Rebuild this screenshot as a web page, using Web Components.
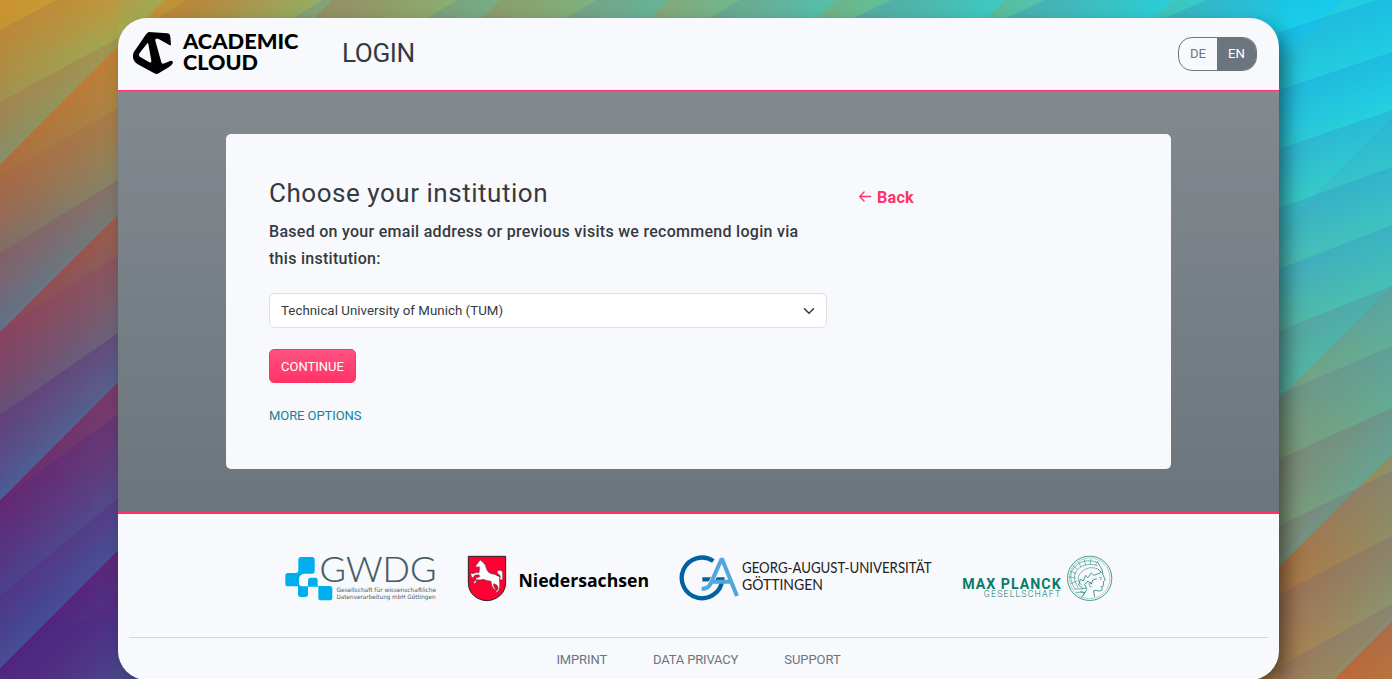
<!DOCTYPE html>
<html lang="en">
<head>
<meta charset="utf-8">
<title>Academic Cloud Login</title>
<style>
html, body { margin: 0; height: 100%; overflow: hidden; }
body { font-family: Roboto, "Liberation Sans", sans-serif; color: #343a40; font-size: 13.6px; }
</style>
</head>
<body>
<ac-backdrop></ac-backdrop>
<ac-shell>
  <ac-header slot="header" heading="LOGIN"><ac-lang slot="tools"></ac-lang></ac-header>
  <ac-panel>
    <span slot="title">Choose your institution</span>
    <span slot="lead">Based on your email address or previous visits we recommend login via this institution:</span>
    <ac-select>Technical University of Munich (TUM)</ac-select>
    <ac-button>CONTINUE</ac-button>
    <ac-more>MORE OPTIONS</ac-more>
    <ac-back slot="aside">Back</ac-back>
  </ac-panel>
  <ac-footer slot="footer">
    <logo-gwdg slot="logos"></logo-gwdg>
    <logo-nds slot="logos"></logo-nds>
    <logo-goe slot="logos"></logo-goe>
    <logo-mpg slot="logos"></logo-mpg>
    <span style="letter-spacing:-.12px">IMPRINT</span><span style="letter-spacing:-.17px">DATA PRIVACY</span><span style="letter-spacing:-.06px">SUPPORT</span>
  </ac-footer>
</ac-shell>
<script>
const define = (name, html, init) => customElements.define(name, class extends HTMLElement {
  constructor() {
    super();
    const t = document.createElement('template');
    t.innerHTML = html;
    this.attachShadow({ mode: 'open' }).appendChild(t.content.cloneNode(true));
  }
  connectedCallback() { if (init) init(this.shadowRoot, this); }
});

define('ac-backdrop', `<style>
:host { position: absolute; inset: 0; overflow: hidden; display: block; }
div, svg { position: absolute; inset: 0; width: 100%; height: 100%; }
.warm { background:
  linear-gradient(#50257f, #50257f) 0 100%/160px 60px no-repeat,
  linear-gradient(#b8703a, #c86830) 100% 100%/160px 60px no-repeat,
  linear-gradient(#d0982a 0, #c08432 75px, #a96a40 180px, #8d4a57 310px, #6b2d70 480px, #56267c 600px, #50257f 679px) 0 0/118px 100% no-repeat,
  linear-gradient(#22cfdf 0, #2ac6d8 120px, #48bdb9 250px, #6ca88c 350px, #8c956a 455px, #b07840 560px, #b8703a 619px, #c86830 679px) 100% 0/113px 100% no-repeat,
  linear-gradient(90deg, #c99a30 118px, #bf8e3b 200px, #a69552 350px, #96a563 520px, #86b078 680px, #70ba88 840px, #5cc19f 1010px, #40c8bd 1170px, #22cfdf 1280px) }
.cool { background:
  linear-gradient(#40539a, #4a5490) 0 100%/160px 60px no-repeat,
  linear-gradient(#909570, #98905c) 100% 100%/160px 60px no-repeat,
  linear-gradient(#b7a645 0, #9da955 45px, #85946a 150px, #6c8180 240px, #5a6f8d 350px, #4a5c98 500px, #42549a 600px, #4a5490 679px) 0 0/118px 100% no-repeat,
  linear-gradient(#16cdec 0, #22d3e2 100px, #3cc7c2 220px, #50baa8 360px, #68a58e 480px, #849976 600px, #98905c 679px) 100% 0/113px 100% no-repeat,
  linear-gradient(90deg, #a4ab53 118px, #91b067 330px, #7cb680 500px, #64bd99 670px, #52c8ae 840px, #3cd0c6 1000px, #28d3da 1170px, #17cfea 1280px);
  -webkit-mask-image: repeating-linear-gradient(135deg, transparent -2.9px, #000 116px);
  mask-image: repeating-linear-gradient(135deg, transparent -2.9px, #000 116px); }
</style><div class="warm"></div><div class="cool"></div>
<svg viewBox="0 0 1392 679" preserveAspectRatio="none"></svg>`, root => {
  const left = [[-42,-105],[30,-33],[102,38],[176,108],[253,180],[331,255],[415,333],[500,414],[596,498],[693,590],[800,690]];
  const right = [[-25,-62],[32,-5],[90,52],[149,110],[208,167],[269,225],[331,286],[394,346],[459,408],[526,471],[594,536],[667,604],[745,675]];
  const top = [[54,21],[185,152],[322,287],[457,421],[597,560],[740,702],[891,846],[1045,998],[1207,1155],[1376,1310]];
  let defs = '', shapes = '', n = 0;
  const band = (p, q, r, s, clip, color, a) => {
    const dx = q[0] - p[0], dy = q[1] - p[1], len2 = dx*dx + dy*dy;
    const mx = (p[0]+q[0])/2, my = (p[1]+q[1])/2;
    const ex = (r[0]+s[0])/2 - mx, ey = (r[1]+s[1])/2 - my;
    const k = (ex * -dy + ey * dx) / len2, id = 'r' + n++;
    defs += `<linearGradient id="${id}" gradientUnits="userSpaceOnUse" x1="${mx}" y1="${my}" x2="${mx - dy*k}" y2="${my + dx*k}"><stop stop-color="${color}" stop-opacity="${a}"/><stop offset="1" stop-color="${color}" stop-opacity="0"/></linearGradient>`;
    shapes += `<polygon clip-path="url(#${clip})" points="${p} ${q} ${s} ${r}" fill="url(#${id})"/>`;
  };
  for (let i = 0; i < left.length - 1; i++)
    band([0,left[i][0]], [118,left[i][1]], [0,left[i+1][0]], [118,left[i+1][1]], 'cl', i < 4 ? '#ab5c48' : i < 6 ? '#8c3a62' : '#5a207a', i > 5 ? .32 : .26);
  for (let i = 0; i < right.length - 1; i++)
    band([1279,right[i][0]], [1392,right[i][1]], [1279,right[i+1][0]], [1392,right[i+1][1]], 'cr', i < 3 ? '#1798e0' : i < 6 ? '#3090c8' : i < 8 ? '#5c7a98' : '#7c6078', i < 6 ? .34 : .3);
  for (let i = 0; i < top.length - 1; i++)
    band([top[i][1],22], [top[i][0],0], [top[i+1][1],22], [top[i+1][0],0], 'ct', i < 2 ? '#b5703a' : i < 6 ? '#618ba0' : '#378ec0', .34);
  root.querySelector('svg').innerHTML = `<defs><clipPath id="cl"><path d="M0 0h118v679H0z"/></clipPath><clipPath id="cr"><path d="M1279 0h113v679h-113z"/></clipPath><clipPath id="ct"><path d="M118 0h1161v60H118z"/></clipPath>${defs}</defs>${shapes}`;
});

define('ac-shell', `<style>
:host { display: flex; flex-direction: column; position: relative; box-sizing: border-box; width: 1161px; height: 662px; margin: 0 0 0 118px; top: 18px; border-radius: 29px; background: #f8f9fc; overflow: hidden; box-shadow: 8px 8px 20px -2px rgba(0,0,0,.5); }
main { box-sizing: border-box; height: 424px; border-top: 1.4px solid #ff3366; border-bottom: 2px solid #ff3366; background: linear-gradient(#82898f, #6c757d); display: flex; justify-content: center; padding-top: 43px; }
</style><slot name="header"></slot><main><slot></slot></main><slot name="footer"></slot>`);

define('ac-header', `<style>
:host { display: flex; height: 72px; box-sizing: border-box; padding: 0 22px 0 15px; flex: none; }
svg { display: block; margin-top: 12px; overflow: visible; }
h1 { margin: 18px 0 0 42px; font-weight: 400; font-size: 26.2px; line-height: 34px; letter-spacing: -.45px; color: #343a40; flex: 1; }
</style>
<svg width="167" height="46" viewBox="133 30 167 46"><g transform="translate(118 10) scale(.3333)"><path fill-rule="evenodd" d="M92 66L148 70Q156 71 157 80L159 104Q158 107 154 105L122 87Q110 83 112 92L130 157Q131 163 140 160L158 152Q167 152 164 160Q162 166 152 172L122 190Q116 194 109 190L58 162Q40 150 46 130Q48 124 54 117L82 76Q87 68 92 66ZM87 101L65 129Q60 137 68 142L94 157Q101 160 100 152L91 102Q90 97 87 101Z"/></g>
<g font-family="Lato" font-weight="900" font-size="20.5"><text x="183" y="49" textLength="115.5" lengthAdjust="spacingAndGlyphs">ACADEMIC</text><text x="183" y="70" textLength="75" lengthAdjust="spacingAndGlyphs">CLOUD</text></g></svg>
<h1></h1><slot name="tools"></slot>`, (root, host) => { root.querySelector('h1').textContent = host.getAttribute('heading'); });

define('ac-lang', `<style>
:host { display: flex; box-sizing: border-box; margin-top: 19px; width: 79px; height: 34px; border: 1px solid #6c757d; border-radius: 14px; overflow: hidden; font-size: 13.2px; line-height: 32px; text-align: center; color: #6c757d; }
span { flex: 0 0 38px; } b { flex: 1; font-weight: 400; background: #6c757d; color: #fff; }
</style><span>DE</span><b>EN</b>`);

define('ac-panel', `<style>
:host { display: flex; box-sizing: border-box; width: 945px; height: 335px; padding: 43px; border-radius: 5px; background: #f8f9fc; }
.main { width: 558px; margin-right: 31px; display: flex; flex-direction: column; align-items: flex-start; }
h2 { margin: 0; font-weight: 400; font-size: 26px; line-height: 32px; letter-spacing: .53px; }
p { margin: 9px 0 21px; font-weight: 500; font-size: 16px; line-height: 27px; letter-spacing: .28px; }
</style><div class="main"><h2><slot name="title"></slot></h2><p><slot name="lead"></slot></p><slot></slot></div><slot name="aside"></slot>`);

define('ac-select', `<style>
:host { display: flex; box-sizing: border-box; align-items: center; justify-content: space-between; width: 558px; height: 35px; padding: 0 11px; background: #fff; border: 1px solid #dee2e6; border-radius: 6px; font-size: 13.3px; letter-spacing: .03px; }
</style><slot></slot><svg width="12" height="12" viewBox="0 0 16 16"><path d="M2 5l6 6 6-6" fill="none" stroke="#343a40" stroke-width="2" stroke-linecap="round" stroke-linejoin="round"/></svg>`);

define('ac-button', `<style>
:host { display: block; box-sizing: border-box; width: 87px; height: 34px; margin-top: 21px; border: 1px solid #ff3366; border-radius: 5px; background: linear-gradient(#ff5280, #ff3366); color: #fff; font-size: 13px; line-height: 33px; text-align: center; }
</style><slot></slot>`);
define('ac-more', `<style>:host { display: block; margin-top: 24px; font-size: 13px; line-height: 18px; letter-spacing: -.08px; color: #12839c; }</style><slot></slot>`);
define('ac-back', `<style>
:host { display: flex; align-items: center; height: 27px; margin: 7px 0 0; color: #ff3366; font-weight: 700; font-size: 16.2px; letter-spacing: .2px; }
svg { margin: -2px 5px 0 0; }
</style><svg width="14" height="15" viewBox="0 0 15 16"><path d="M13.5 8H2M6.5 3.2L1.8 8l4.7 4.8" fill="none" stroke="#ff3366" stroke-width="1.4" stroke-linecap="round" stroke-linejoin="round"/></svg><slot></slot>`);

define('ac-footer', `<style>
:host { display: flex; flex-direction: column; flex: 1; padding: 41px 11px 0; }
.logos { display: flex; justify-content: center; height: 82px; border-bottom: 1px solid #d3d6da; padding-left: 1px; }
nav { display: flex; justify-content: center; gap: 46px; margin-top: 13px; font-size: 13px; line-height: 18px; color: #6c757d; }
</style><div class="logos"><slot name="logos"></slot></div><nav><slot></slot></nav>`);

define('logo-gwdg', `<style>:host{display:block;width:183px} svg{display:block;overflow:visible}</style>
<svg width="153" height="48" viewBox="285 555 153 48"><g transform="translate(270 545) scale(.3333)" fill="#00aeef">
<path d="M93 36H126Q134 36 134 44V78Q134 86 126 86H106Q87 86 87 103V115Q87 123 96 124H114V107Q114 98 123 98H136Q143 98 143 105V123H179Q187 123 187 131V159Q187 166 179 166H153Q145 166 145 158V125H114V148Q114 156 106 156H92Q84 156 84 148V124H54Q46 124 46 116V92Q46 84 54 84H77Q85 84 85 76V44Q85 36 93 36Z"/></g>
<text x="319.5" y="582" font-family="Lato" font-size="35" font-weight="300" fill="#465964" stroke="#465964" stroke-width=".2" textLength="117" lengthAdjust="spacingAndGlyphs">GWDG</text>
<g font-family="DejaVu Sans" font-size="6" fill="#465964"><text x="336.5" y="592" textLength="99.5" lengthAdjust="spacingAndGlyphs">Gesellschaft für wissenschaftliche</text><text x="336.5" y="599" textLength="99" lengthAdjust="spacingAndGlyphs">Datenverarbeitung mbH Göttingen</text></g></svg>`);

define('logo-nds', `<style>:host{display:block;width:212px} svg{display:block;overflow:visible}</style>
<svg width="183" height="48" viewBox="468 555 183 48"><g transform="translate(460 545) scale(.3333)">
<path d="M25 34H137V112Q137 145 108 160Q81 174 53 160Q25 145 25 112Z" fill="#ff0033" stroke="#222" stroke-width="3"/>
<path d="M61 45L67 50Q77 57 79 70Q83 85 98 87Q107 87 111 92Q117 92 121 99Q123 91 112 85Q109 77 118 76Q129 75 128 87L128 100Q128 106 123 105Q119 104 118 99L119 113Q121 124 116 137L107 144L108 139L114 132Q115 122 109 119L101 116Q98 125 110 135L102 133Q93 123 93 109Q80 108 70 103Q61 106 51 104L48 112L42 118L41 110L49 105L47 99Q56 98 60 94L56 89L44 91L39 99L34 95L32 84L39 86Q47 82 57 83Q59 75 58 65L50 67L47 63L55 52Z" fill="#fff" stroke="#333" stroke-width="1.5"/></g>
<text x="518.5" y="586.5" font-family="Open Sans" font-weight="700" font-size="18.5" textLength="130.5" lengthAdjust="spacingAndGlyphs">Niedersachsen</text></svg>`);

define('logo-goe', `<style>:host{display:block;width:282px} svg{display:block;overflow:visible}</style>
<svg width="253" height="48" viewBox="680 555 253 48"><g transform="translate(670 545) scale(.3333)" fill="none">
<path d="M130 48A61 61 0 1 0 157 103H97" stroke="#00629f" stroke-width="13"/>
<path d="M95 132Q115 132 122 116L155 46L201 153" stroke="#f8f9fc" stroke-width="16"/>
<path d="M95 132Q115 131 122 116L154 44L157 44L201 153M124 110H180" stroke="#51a7da" stroke-width="12"/></g>
<g font-family="Lato" font-size="15.1" fill="#222"><text x="742" y="573.3" textLength="189.5" lengthAdjust="spacingAndGlyphs">GEORG-AUGUST-UNIVERSITÄT</text><text x="742" y="590.3" textLength="81" lengthAdjust="spacingAndGlyphs">GÖTTINGEN</text></g></svg>`);

define('logo-mpg', `<style>:host{display:block;width:151px} svg{display:block;overflow:visible}</style>
<svg width="151" height="48" viewBox="962 555 151 48"><g fill="#087a6a" font-family="Roboto"><text x="962.2" y="588.7" font-weight="700" font-size="14.2" textLength="98.5">MAX PLANCK</text><text x="983.8" y="597.3" font-size="8.9" font-weight="300" textLength="76.5">GESELLSCHAFT</text></g>
<g transform="translate(950 545) scale(.3333)" fill="none" stroke="#16806f" stroke-width="2.3">
<circle cx="419" cy="100" r="66.5"/><circle cx="419" cy="100" r="61" stroke-width="1"/>
<path d="M375 132Q350 92 375 65Q402 38 444 53M384 127Q363 94 384 73Q406 51 443 62M397 122Q374 101 394 82Q415 61 444 72" stroke-dasharray="4 1.5"/>
<path d="M368 62l14 10M360 78l19 8M356 96l21 3M362 115l20-7M385 50l8 16M403 43l4 18M423 42l-2 18M443 48l-7 14" stroke-width="1.5"/>
<path d="M444 53L452 67Q459 76 459 90L466 105L460 110L461 121L456 126V135Q450 141 438 136L431 137L434 156M411 133Q400 149 394 158M444 72L454 82L432 91L424 84L414 98L407 91L400 108L391 103L386 120L397 130H410L404 119L414 108L424 117L429 105L441 101"/>
<path d="M447 98h9m-6 5h5m-3 21h7m-32-8q-7-9-10 0q2 12 8 10M391 139l14 4-5 9M374 132h25M378 142h26" stroke-width="1.8"/></g></svg>`);
</script>
</body>
</html>
